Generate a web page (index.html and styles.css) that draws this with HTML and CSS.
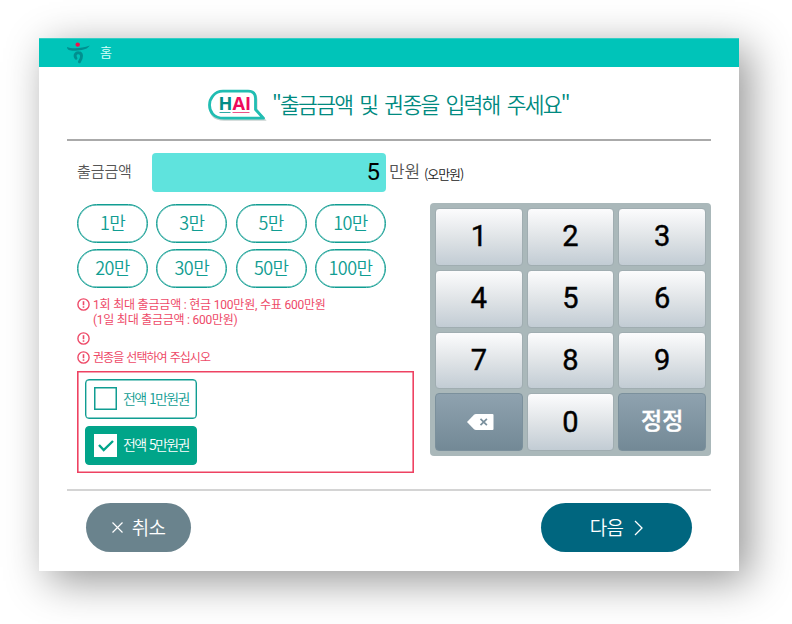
FILE: index.html
```html
<!DOCTYPE html>
<html lang="ko">
<head>
<meta charset="utf-8">
<title>출금</title>
<link rel="stylesheet" href="styles.css">
</head>
<body>
<svg width="0" height="0" class="defs">
  <symbol id="alert" viewBox="0 0 13 13"><circle cx="6.5" cy="6.5" r="5.6" fill="none" stroke="#ee4a68" stroke-width="1.4"/><path d="M6.5 3.2v4" stroke="#ee4a68" stroke-width="1.6"/><path d="M6.5 8.3v1.5" stroke="#ee4a68" stroke-width="1.6"/></symbol>
</svg>
<main class="window">
  <header class="topbar">
    <svg class="logo" width="24" height="22" viewBox="0 0 24 22">
      <path d="M0 5C4 6.800 14 7 22.800 3.600c-1.800 3.200-6.300 4.600-12 5C4.500 9.100 0 8.800 0 5Z" fill="#008f8f"/>
      <path d="M9 16.200C6.800 13 9 10.600 11.500 10.800c4 .2 3.800 5 .9 9" fill="none" stroke="#008f8f" stroke-width="2.900" stroke-linecap="round"/>
      <circle cx="10.700" cy="2.600" r="2.200" fill="#f0104c"/>
    </svg>
    <span class="home">홈</span>
  </header>
  <section class="title-row">
    <svg class="hai" width="60" height="34" viewBox="0 0 60 34">
      <path d="M16 4.200H41Q49.500 4.200 49.500 12V22L57.500 31.700H17C6 31.700 3 25 3 18S7 4.200 16 4.200Z" fill="none" stroke="#c9d2d1" stroke-width="2"/>
      <path d="M16 3.200H41Q48.500 3.200 48.500 10.500V21.500L56.500 30.200H17C6 30.200 2.500 23 2.500 17S7 3.200 16 3.200Z" fill="#fff" stroke="#21bdb2" stroke-width="2.800" stroke-linejoin="round"/>
      <text x="11.500" y="21.500" class="hai-text" textLength="32.500" lengthAdjust="spacingAndGlyphs"><tspan fill="#008c87">H</tspan><tspan fill="#ee0a5c">AI</tspan></text>
      <path d="M12.500 24.500h11" stroke="#30aaa6"/><path d="M25.500 24.500h17" stroke="#ee5288"/>
    </svg>
    <h1>"출금금액 및 권종을 입력해 주세요"</h1>
  </section>
  <section class="content">
    <div class="form">
      <div class="amount">
        <span class="label">출금금액</span>
        <div class="field">5</div>
        <span class="unit">만원</span>
        <span class="reading">(오만원)</span>
      </div>
      <div class="presets">
        <button>1만</button><button>3만</button><button>5만</button><button>10만</button>
        <button>20만</button><button>30만</button><button>50만</button><button>100만</button>
      </div>
      <ul class="notes">
        <li><svg><use href="#alert"/></svg><div class="note"><div class="limit">1회 최대 출금금액 : 현금 100만원, 수표 600만원</div><div class="daily">(1일 최대 출금금액 : 600만원)</div></div></li>
        <li><svg><use href="#alert"/></svg></li>
        <li><svg><use href="#alert"/></svg><div class="note choose">권종을 선택하여 주십시오</div></li>
      </ul>
      <div class="bills">
        <div class="bill"><i class="check"></i><span>전액 1만원권</span></div>
        <div class="bill selected"><i class="check"><svg width="23" height="23" viewBox="0 0 23 23"><path d="M5 11l4.700 5L19 7" fill="none" stroke="#00a58a" stroke-width="2.400"/></svg></i><span>전액 5만원권</span></div>
      </div>
    </div>
    <div class="keypad">
      <button>1</button><button>2</button><button>3</button>
      <button>4</button><button>5</button><button>6</button>
      <button>7</button><button>8</button><button>9</button>
      <button class="dark" aria-label="지우기"><svg width="27" height="16" viewBox="0 0 27 16"><path d="M0 8 7 .8Q7.800 0 9 0H25.500Q26.500 0 26.500 1V15Q26.500 16 25.500 16H9Q7.800 16 7 15.200Z" fill="#fff"/><path d="m13.500 4.800 6.400 6.400m0-6.400-6.400 6.400" stroke="#7a909d" stroke-width="1.700"/></svg></button>
      <button>0</button>
      <button class="dark fix">정정</button>
    </div>
  </section>
  <footer class="actions">
    <button class="cancel"><svg width="11" height="11" viewBox="0 0 11 11"><path d="m.5.5 10 10m0-10-10 10" stroke="#fff" stroke-width="1.200"/></svg><span>취소</span></button>
    <button class="next"><span>다음</span><svg width="9" height="16" viewBox="0 0 9 16"><path d="m1 1 7 7-7 7" fill="none" stroke="#fff" stroke-width="1.300"/></svg></button>
  </footer>
</main>
</body>
</html>
```
FILE: styles.css
```css
* { box-sizing: border-box; }
body { margin: 0; height: 624px; padding: 38px 0 0 39px; background: #fff; overflow: hidden; font-family: "Noto Sans CJK KR", sans-serif; font-weight: 350; }
button { font: inherit; border: 0; padding: 0; margin: 0; }
.defs { display: block; }
.window { width: 700px; height: 533px; background: #fff; box-shadow: 10px 10px 40px rgba(0,0,0,.42); display: flex; flex-direction: column; }
.topbar { height: 29px; background: #00c4b9; border-top: 1px solid #35cec5; display: flex; align-items: center; padding-left: 28px; }
.logo { margin-top: -1px; }
.home { color: #d5fffa; font-size: 13px; line-height: 26px; margin: -2px 0 0 9px; font-weight: 400; }
.title-row { height: 74px; margin: 0 28px; border-bottom: 2px solid #aaa; display: flex; align-items: center; padding-left: 140px; }
.hai { flex: none; margin-top: 3px; }
.hai-text { font: 700 18px "Open Sans", sans-serif; }
h1 { margin: 1px 0 0 5px; font-size: 21.5px; line-height: 32px; font-weight: 350; letter-spacing: -1.75px; word-spacing: 2.8px; color: #008a80; white-space: nowrap; }
.content { display: flex; justify-content: space-between; height: 348px; padding: 12px 28px 0 38px; }
.form { width: 337px; flex: none; }
.amount { display: flex; height: 39px; white-space: nowrap; }
.amount > * { flex: none; }
.label { width: 75px; font-size: 15px; line-height: 35px; letter-spacing: -.1px; color: #555; }
.field { width: 234px; border-radius: 4px; background: #5fe3dd; color: #000; font-family: Roboto, sans-serif; font-size: 24px; line-height: 38px; text-align: right; padding-right: 6px; font-weight: 400; }
.unit { margin-left: 3px; font-size: 17px; line-height: 36px; letter-spacing: -.1px; color: #555; }
.reading { margin-left: 4px; font-size: 13px; line-height: 41px; letter-spacing: -1.1px; color: #222; }
.presets { margin-top: 12px; width: 309px; display: grid; grid-template-columns: repeat(4, 71px); justify-content: space-between; grid-auto-rows: 39px; row-gap: 6px; }
.presets button { border: 1px solid #109d92; box-shadow: inset 0 0 0 .4px #109d92; border-radius: 20px; background: #fff; color: #109d92; font-size: 18px; line-height: 34px; letter-spacing: -.6px; padding-bottom: 3px; }
.notes { list-style: none; margin: 8px 0 0; padding: 0; color: #ee4a68; font-family: Roboto, "Noto Sans CJK KR", sans-serif; font-size: 12px; font-weight: 400; line-height: 15px; white-space: nowrap; }
.notes li { display: flex; min-height: 19px; gap: 3px; }
.notes li:first-child { height: 34px; }
.notes svg { width: 13px; height: 13px; margin-top: 2px; flex: none; }
.note { padding-top: 2px; height: 19px; }
.notes .limit, .notes .daily { height: 15px; }
.limit { letter-spacing: -.2px; }
.daily { letter-spacing: -.25px; }
.choose { letter-spacing: -.95px; word-spacing: 1px; }
.bills { margin-top: 3px; width: 337px; height: 102px; border: 1px solid #ee4262; box-shadow: inset 0 0 0 .6px #ee4262; padding: 7px; display: flex; flex-direction: column; gap: 7px; }
.bill { width: 112px; height: 39.500px; flex: none; border: 1px solid #109d92; box-shadow: inset 0 0 0 .4px #109d92; border-radius: 4px; color: #109d92; display: flex; align-items: center; padding-left: 8px; gap: 6px; font-size: 14px; letter-spacing: -1.6px; word-spacing: 1px; white-space: nowrap; }
.bill span { margin-top: -2px; }
.check { width: 23px; height: 23px; border: 1px solid #109d92; box-shadow: inset 0 0 0 .5px #109d92; background: #fff; flex: none; }
.selected { background: #00a589; color: #fff; border-color: #00a589; }
.selected .check { border: 0; box-shadow: none; }
.check svg { display: block; }
.keypad { margin-top: 50px; width: 281px; height: 253px; background: #aab8ba; border-radius: 4px; padding: 5px; display: grid; grid-template-columns: repeat(3, 1fr); grid-template-rows: repeat(4, 1fr); gap: 4px; }
.keypad button { border: 1px solid #a0adb1; border-radius: 4px; background: linear-gradient(#fcfcfd, #e0e4e7 50%, #c2ccd4); color: #000; font-family: Roboto, "Noto Sans CJK KR", sans-serif; font-size: 29px; line-height: 50px; font-weight: 400; -webkit-text-stroke: .4px currentColor; padding-bottom: 1px; }
.keypad .dark { background: linear-gradient(#8fa2af, #738996); border-color: #7b909c; color: #fff; display: flex; align-items: center; justify-content: center; }
.keypad .dark svg { margin: 1px 0 0 3px; }
.keypad .fix { font-size: 23px; font-weight: 500; }
.actions { margin: 0 28px; border-top: 2px solid #d4d4d4; padding: 12px 19px 0; display: flex; justify-content: space-between; }
.actions button { height: 49px; border-radius: 25px; color: #fff; font-size: 19px; line-height: 45px; letter-spacing: -.8px; display: flex; align-items: center; justify-content: center; }
.actions span { margin-top: -2px; }
.cancel { width: 105px; background: #6a838d; gap: 9px; }
.next { width: 151px; background: #00667f; gap: 11px; }
```
